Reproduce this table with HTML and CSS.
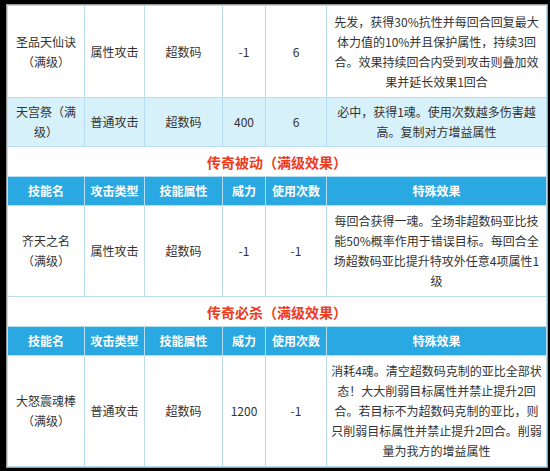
FILE: index.html
```html
<!DOCTYPE html>
<html lang="zh-CN">
<head>
<meta charset="utf-8">
<link rel="stylesheet" href="styles.css">
</head>
<body>
<div class="frame">
<table class="skills">
<colgroup>
<col class="c-name"><col class="c-type"><col class="c-attr"><col class="c-pow"><col class="c-use"><col class="c-eff">
</colgroup>
<tr class="r1">
<td>圣品天仙诀<br>（满级）</td><td>属性攻击</td><td>超数码</td><td>-1</td><td>6</td>
<td class="eff">先发，获得30%抗性并每回合回复最大<br>体力值的10%并且保护属性，持续3回<br>合。效果持续回合内受到攻击则叠加效<br>果并延长效果1回合</td>
</tr>
<tr class="alt r2">
<td>天宫祭（满<br>级）</td><td>普通攻击</td><td>超数码</td><td>400</td><td>6</td>
<td class="eff">必中，获得1魂。使用次数越多伤害越<br>高。复制对方增益属性</td>
</tr>
<tr class="title">
<td colspan="6">传奇被动（满级效果）</td>
</tr>
<tr class="head">
<td>技能名</td><td>攻击类型</td><td>技能属性</td><td>威力</td><td>使用次数</td><td>特殊效果</td>
</tr>
<tr>
<td>齐天之名<br>（满级）</td><td>属性攻击</td><td>超数码</td><td>-1</td><td>-1</td>
<td class="eff">每回合获得一魂。全场非超数码亚比技<br>能50%概率作用于错误目标。每回合全<br>场超数码亚比提升特攻外任意4项属性1<br>级</td>
</tr>
<tr class="title">
<td colspan="6">传奇必杀（满级效果）</td>
</tr>
<tr class="head">
<td>技能名</td><td>攻击类型</td><td>技能属性</td><td>威力</td><td>使用次数</td><td>特殊效果</td>
</tr>
<tr>
<td>大怒震魂棒<br>（满级）</td><td>普通攻击</td><td>超数码</td><td>1200</td><td>-1</td>
<td class="eff">消耗4魂。清空超数码克制的亚比全部状<br>态！大大削弱目标属性并禁止提升2回<br>合。若目标不为超数码克制的亚比，则<br>只削弱目标属性并禁止提升2回合。削弱<br>量为我方的增益属性</td>
</tr>
</table>
</div>
</body>
</html>
```
FILE: styles.css
```css
html, body {
  margin: 0;
  padding: 0;
  background: #000;
}
.frame {
  padding: 5px 0 0 7px;
  height: 466px;
  overflow: hidden;
}
.skills {
  width: 539px;
  table-layout: fixed;
  border-collapse: collapse;
  background: #fff;
  font-family: "Microsoft YaHei", "Noto Sans CJK SC", "Noto Sans", sans-serif;
  font-size: 12px;
  color: #333;
  outline: 1px solid #9a9a9a;
}
.c-name { width: 77px; }
.c-type { width: 60px; }
.c-attr { width: 78px; }
.c-pow { width: 43px; }
.c-use { width: 61px; }
.c-eff { width: 220px; }
.skills td {
  border: 1px solid #b7ddee;
  text-align: center;
  vertical-align: middle;
  line-height: 20px;
  padding: 5px 2px;
  white-space: nowrap;
}
.skills .r1 td { padding-top: 6px; padding-bottom: 5px; }
.skills .r2 td { padding-top: 4px; padding-bottom: 4px; }
.skills td.eff {
  padding-left: 4px;
  padding-right: 4px;
}
.alt td {
  background: #d7f1fb;
}
.title td {
  background: #fff;
  color: #ec3c1c;
  font-weight: bold;
  font-size: 14px;
  padding: 5px 0 4px;
}
.head td {
  background: #2aa8e1;
  color: #fff;
  font-weight: bold;
  padding: 4px 2px;
  border-color: #b7ddee;
}
```
